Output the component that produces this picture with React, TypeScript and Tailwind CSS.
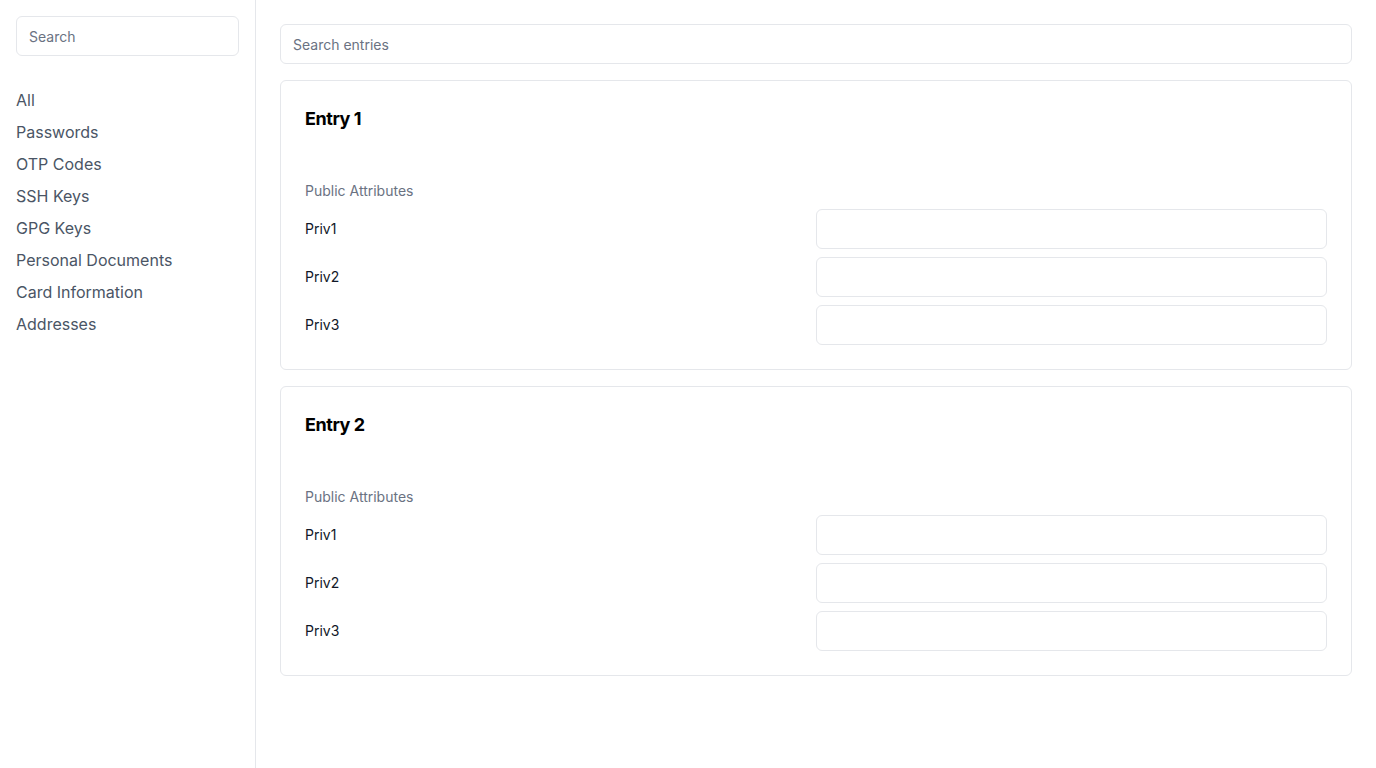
import React from "react";

const nav = ["All", "Passwords", "OTP Codes", "SSH Keys", "GPG Keys", "Personal Documents", "Card Information", "Addresses"];

function Entry({ title }: { title: string }) {
  return (
    <div className="rounded-md border border-gray-200 bg-white p-6">
      <h2 className="text-lg font-bold leading-7 tracking-tight text-black">{title}</h2>
      <div className="mt-12 text-sm leading-5 text-gray-500">Public Attributes</div>
      <div className="mt-2 flex flex-col gap-2">
        {["Priv1", "Priv2", "Priv3"].map((p) => (
          <div key={p} className="grid grid-cols-2 items-center">
            <div className="text-sm text-gray-900">{p}</div>
            <input className="h-10 w-full rounded-md border border-gray-200 bg-white px-3 text-sm outline-none" />
          </div>
        ))}
      </div>
    </div>
  );
}

export default function App() {
  return (
    <div className="flex min-h-[768px] bg-white" style={{ fontFamily: "Inter, 'Noto Sans', sans-serif" }}>
      <aside className="w-64 shrink-0 border-r border-gray-200 p-4">
        <input
          placeholder="Search"
          className="h-10 w-full rounded-md border border-gray-200 px-3 text-sm text-gray-900 placeholder:text-gray-500 outline-none"
        />
        <nav className="mt-7 flex flex-col">
          {nav.map((n) => (
            <div key={n} className="h-8 leading-8 text-base text-gray-600">
              {n}
            </div>
          ))}
        </nav>
      </aside>
      <main className="flex-1 p-6">
        <input
          placeholder="Search entries"
          className="h-10 w-full rounded-md border border-gray-200 px-3 text-sm text-gray-900 placeholder:text-gray-500 outline-none"
        />
        <div className="mt-4 flex flex-col gap-4">
          <Entry title="Entry 1" />
          <Entry title="Entry 2" />
        </div>
      </main>
    </div>
  );
}
